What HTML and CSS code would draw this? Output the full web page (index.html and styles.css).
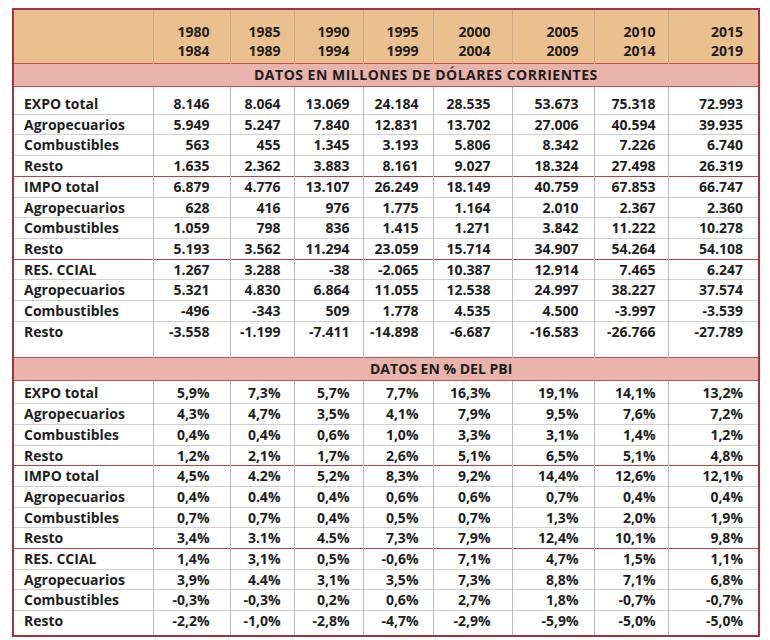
FILE: index.html
```html
<!DOCTYPE html>
<html lang="es">
<head>
<meta charset="utf-8">
<title>Comercio exterior</title>
<link rel="stylesheet" href="styles.css">
</head>
<body>
<div class="wrap">
<table class="data">
  <colgroup>
    <col class="c0"><col class="c1"><col class="c2"><col class="c3"><col class="c4"><col class="c5"><col class="c6"><col class="c7"><col class="c8">
  </colgroup>
  <thead>
    <tr class="head">
      <th></th>
      <th>1980<br>1984</th>
      <th>1985<br>1989</th>
      <th>1990<br>1994</th>
      <th>1995<br>1999</th>
      <th>2000<br>2004</th>
      <th>2005<br>2009</th>
      <th>2010<br>2014</th>
      <th>2015<br>2019</th>
    </tr>
  </thead>
  <tbody>
    <tr class="section s1"><td colspan="9">DATOS EN MILLONES DE DÓLARES CORRIENTES</td></tr>
    <tr class="first"><td>EXPO total</td><td>8.146</td><td>8.064</td><td>13.069</td><td>24.184</td><td>28.535</td><td>53.673</td><td>75.318</td><td>72.993</td></tr>
    <tr><td>Agropecuarios</td><td>5.949</td><td>5.247</td><td>7.840</td><td>12.831</td><td>13.702</td><td>27.006</td><td>40.594</td><td>39.935</td></tr>
    <tr><td>Combustibles</td><td>563</td><td>455</td><td>1.345</td><td>3.193</td><td>5.806</td><td>8.342</td><td>7.226</td><td>6.740</td></tr>
    <tr><td>Resto</td><td>1.635</td><td>2.362</td><td>3.883</td><td>8.161</td><td>9.027</td><td>18.324</td><td>27.498</td><td>26.319</td></tr>
    <tr class="grp"><td>IMPO total</td><td>6.879</td><td>4.776</td><td>13.107</td><td>26.249</td><td>18.149</td><td>40.759</td><td>67.853</td><td>66.747</td></tr>
    <tr><td>Agropecuarios</td><td>628</td><td>416</td><td>976</td><td>1.775</td><td>1.164</td><td>2.010</td><td>2.367</td><td>2.360</td></tr>
    <tr><td>Combustibles</td><td>1.059</td><td>798</td><td>836</td><td>1.415</td><td>1.271</td><td>3.842</td><td>11.222</td><td>10.278</td></tr>
    <tr><td>Resto</td><td>5.193</td><td>3.562</td><td>11.294</td><td>23.059</td><td>15.714</td><td>34.907</td><td>54.264</td><td>54.108</td></tr>
    <tr class="grp"><td>RES. CCIAL</td><td>1.267</td><td>3.288</td><td>-38</td><td>-2.065</td><td>10.387</td><td>12.914</td><td>7.465</td><td>6.247</td></tr>
    <tr><td>Agropecuarios</td><td>5.321</td><td>4.830</td><td>6.864</td><td>11.055</td><td>12.538</td><td>24.997</td><td>38.227</td><td>37.574</td></tr>
    <tr><td>Combustibles</td><td>-496</td><td>-343</td><td>509</td><td>1.778</td><td>4.535</td><td>4.500</td><td>-3.997</td><td>-3.539</td></tr>
    <tr class="last"><td>Resto</td><td>-3.558</td><td>-1.199</td><td>-7.411</td><td>-14.898</td><td>-6.687</td><td>-16.583</td><td>-26.766</td><td>-27.789</td></tr>
    <tr class="section s2"><td colspan="9">DATOS EN % DEL PBI</td></tr>
    <tr class="first2"><td>EXPO total</td><td>5,9%</td><td>7,3%</td><td>5,7%</td><td>7,7%</td><td>16,3%</td><td>19,1%</td><td>14,1%</td><td>13,2%</td></tr>
    <tr><td>Agropecuarios</td><td>4,3%</td><td>4,7%</td><td>3,5%</td><td>4,1%</td><td>7,9%</td><td>9,5%</td><td>7,6%</td><td>7,2%</td></tr>
    <tr><td>Combustibles</td><td>0,4%</td><td>0,4%</td><td>0,6%</td><td>1,0%</td><td>3,3%</td><td>3,1%</td><td>1,4%</td><td>1,2%</td></tr>
    <tr><td>Resto</td><td>1,2%</td><td>2,1%</td><td>1,7%</td><td>2,6%</td><td>5,1%</td><td>6,5%</td><td>5,1%</td><td>4,8%</td></tr>
    <tr class="grp"><td>IMPO total</td><td>4,5%</td><td>4.2%</td><td>5,2%</td><td>8,3%</td><td>9,2%</td><td>14,4%</td><td>12,6%</td><td>12,1%</td></tr>
    <tr><td>Agropecuarios</td><td>0,4%</td><td>0.4%</td><td>0,4%</td><td>0,6%</td><td>0,6%</td><td>0,7%</td><td>0,4%</td><td>0,4%</td></tr>
    <tr><td>Combustibles</td><td>0,7%</td><td>0,7%</td><td>0,4%</td><td>0,5%</td><td>0,7%</td><td>1,3%</td><td>2,0%</td><td>1,9%</td></tr>
    <tr><td>Resto</td><td>3,4%</td><td>3.1%</td><td>4.5%</td><td>7,3%</td><td>7,9%</td><td>12,4%</td><td>10,1%</td><td>9,8%</td></tr>
    <tr class="grp"><td>RES. CCIAL</td><td>1,4%</td><td>3,1%</td><td>0,5%</td><td>-0,6%</td><td>7,1%</td><td>4,7%</td><td>1,5%</td><td>1,1%</td></tr>
    <tr><td>Agropecuarios</td><td>3,9%</td><td>4.4%</td><td>3,1%</td><td>3,5%</td><td>7,3%</td><td>8,8%</td><td>7,1%</td><td>6,8%</td></tr>
    <tr><td>Combustibles</td><td>-0,3%</td><td>-0,3%</td><td>0,2%</td><td>0,6%</td><td>2,7%</td><td>1,8%</td><td>-0,7%</td><td>-0,7%</td></tr>
    <tr class="end"><td>Resto</td><td>-2,2%</td><td>-1,0%</td><td>-2,8%</td><td>-4,7%</td><td>-2,9%</td><td>-5,9%</td><td>-5,0%</td><td>-5,0%</td></tr>
  </tbody>
</table>
</div>
</body>
</html>
```

FILE: styles.css
```css
html, body {
  margin: 0;
  padding: 0;
  background: #ffffff;
}

.wrap {
  padding: 8px 12px 0 12px;
}

.data {
  width: 746px;
  table-layout: fixed;
  border-collapse: collapse;
  border: 2px solid #a3343f;
  font-family: "Open Sans", "Liberation Sans", sans-serif;
  font-weight: 700;
  font-size: 14px;
  color: #1e1e1e;
}

.c0 { width: 140px; }
.c1 { width: 77px; }
.c2 { width: 64px; }
.c3 { width: 69px; }
.c4 { width: 70px; }
.c5 { width: 79px; }
.c6 { width: 82px; }
.c7 { width: 74px; }
.c8 { width: 91px; }

.data th,
.data td {
  padding: 0;
  text-align: right;
  white-space: nowrap;
  border-left: 1px solid #b9b9b9;
}

.data td {
  line-height: 19.7px;
  border-top: 1px solid #cfcfcf;
  vertical-align: middle;
}

.data td:first-child,
.data th:first-child {
  text-align: left;
  padding-left: 10px;
}

.head th {
  background: #ebc08f;
  line-height: 19px;
  height: 50px;
  vertical-align: bottom;
  padding-bottom: 3px;
  border-left: 1px solid #c9ab8a;
}

.data td:nth-child(2), .head th:nth-child(2) { padding-right: 20px; }
.data td:nth-child(3), .head th:nth-child(3) { padding-right: 13px; }
.data td:nth-child(4), .head th:nth-child(4) { padding-right: 13px; }
.data td:nth-child(5), .head th:nth-child(5) { padding-right: 14px; }
.data td:nth-child(6), .head th:nth-child(6) { padding-right: 21px; }
.data td:nth-child(7), .head th:nth-child(7) { padding-right: 15px; }
.data td:nth-child(8), .head th:nth-child(8) { padding-right: 12px; }
.data td:nth-child(9), .head th:nth-child(9) { padding-right: 15px; }

.section td {
  background: #e7b3ab;
  border-top: 1px solid #c14f55;
  border-bottom: 1px solid #c14f55;
  text-align: left;
  line-height: 22px;
}

.s1 td:first-child {
  padding-left: 240px;
  letter-spacing: 0.5px;
}

.s2 td:first-child { padding-left: 356px; }

.first td {
  padding-top: 7px;
  border-top: none;
}

.first2 td {
  padding-top: 2px;
  border-top: none;
}

.last td {
  padding-bottom: 16px;
}

.end td {
  padding-bottom: 4px;
}

.grp td {
  border-top: 1px solid #b4434b;
}
```
